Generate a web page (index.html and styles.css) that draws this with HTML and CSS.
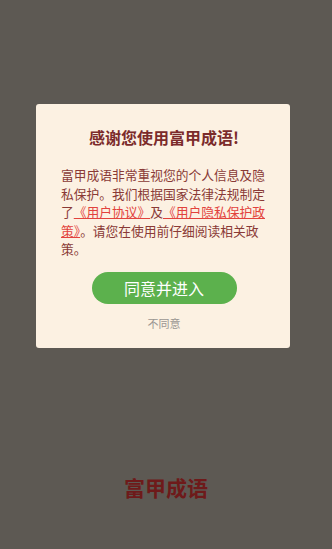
FILE: index.html
```html
<!DOCTYPE html>
<html lang="zh-CN">
<head>
    <meta charset="UTF-8">
    <meta name="viewport" content="width=device-width, initial-scale=1.0">
    <title>富甲成语</title>
    <link rel="stylesheet" href="styles.css">
</head>
<body>
    <div class="page">
        <div class="dialog">
            <h3 class="dialog-title">感谢您使用富甲成语!</h3>
            <p class="dialog-text">富甲成语非常重视您的个人信息及隐私保护。我们根据国家法律法规制定了<a href="#" class="link">《用户协议》</a>及<a href="#" class="link">《用户隐私保护政策》</a>。请您在使用前仔细阅读相关政策。</p>
            <button class="agree-btn">同意并进入</button>
            <div class="refuse">不同意</div>
        </div>
        <div class="brand">富甲成语</div>
    </div>
</body>
</html>
```

FILE: styles.css
```css
/* 全体 */
body {
    margin: 0;
    font-family: "Noto Sans CJK SC", "Noto Sans", sans-serif;
    background-color: #5d5953;
}

.page {
    min-height: 549px;
    display: flex;
    flex-direction: column;
    align-items: center;
}

/* 隐私弹窗 */
.dialog {
    align-self: flex-start;
    margin: 104px 0 0 36px;
    width: 254px;
    box-sizing: border-box;
    padding: 22px 23px 17px 25px;
    background-color: #fcf1e2;
    border-radius: 3px;
    display: flex;
    flex-direction: column;
    align-items: center;
}

.dialog-title {
    margin: 0;
    font-size: 16px;
    line-height: 22px;
    font-weight: bold;
    color: #7b2b2b;
}

.dialog-text {
    margin: 18px 0 0;
    font-size: 12.75px;
    line-height: 18.5px;
    color: #8a3a36;
    align-self: stretch;
}

.link {
    color: #e2423c;
    text-decoration: underline;
}

.agree-btn {
    margin-top: 13px;
    width: 145px;
    height: 32px;
    border: none;
    border-radius: 16px;
    background-color: #5cb14d;
    color: #fff;
    font-family: inherit;
    font-size: 16px;
    cursor: pointer;
}

.refuse {
    margin-top: 11px;
    font-size: 11px;
    line-height: 16px;
    color: #9a9692;
}

/* 底部标志 */
.brand {
    margin-top: auto;
    margin-bottom: 48px;
    font-size: 21px;
    line-height: 28px;
    font-weight: bold;
    color: #6e1a1a;
}
```
